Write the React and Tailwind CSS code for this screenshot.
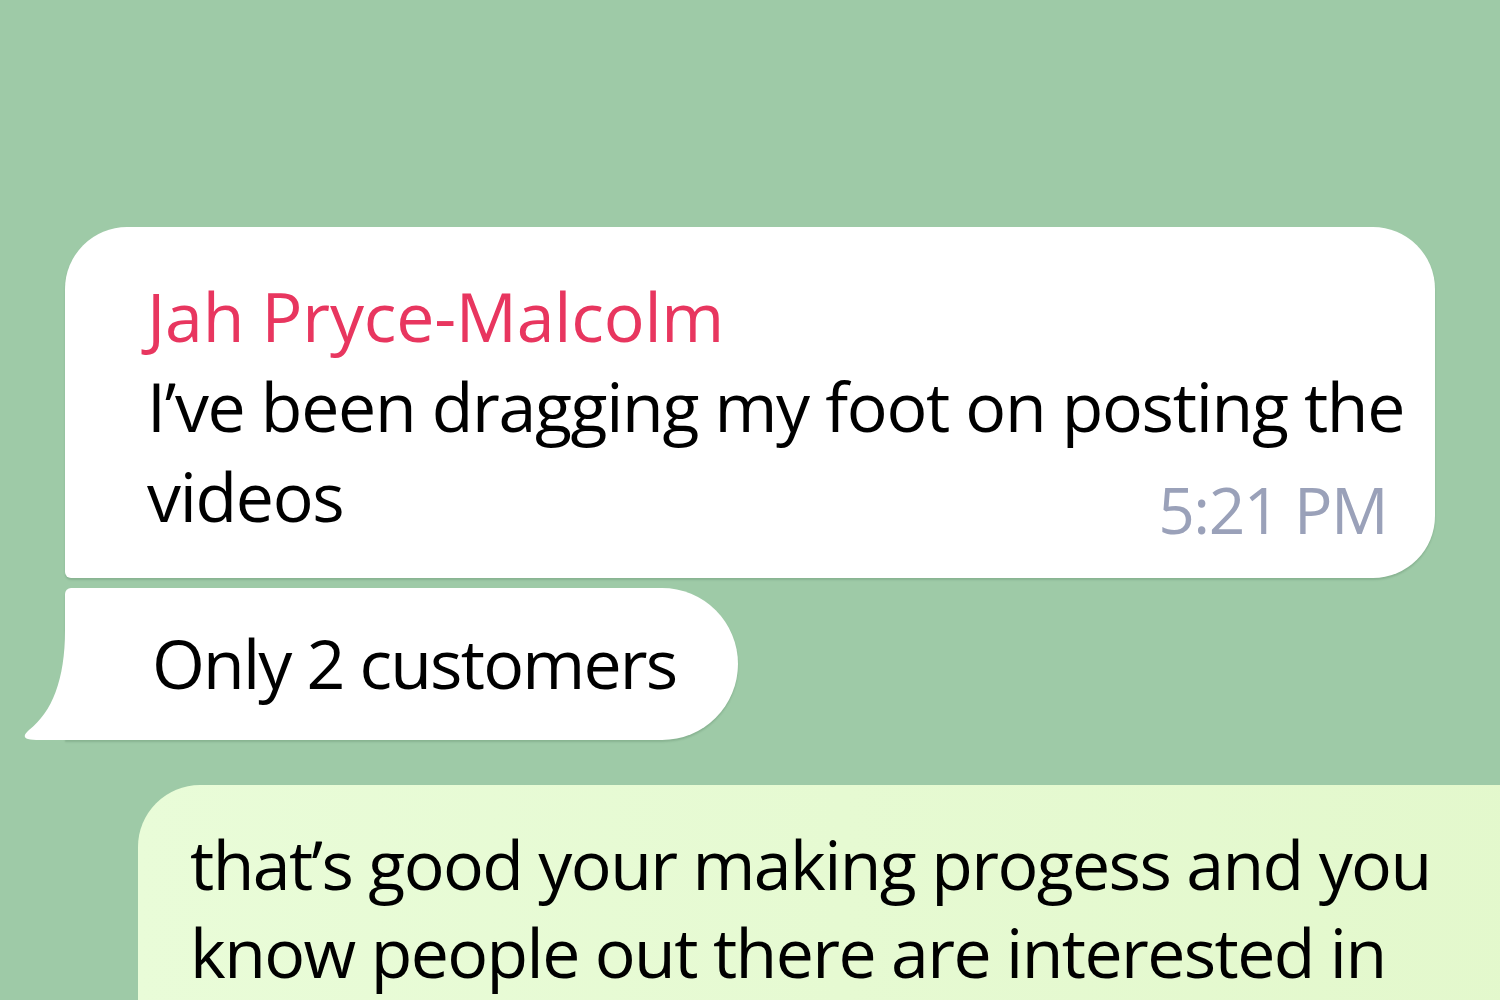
import React from "react";

const font = { fontFamily: '"Open Sans", "Noto Sans", sans-serif' };

const Tail = () => (
  <svg
    className="absolute left-[-45px] bottom-0"
    width="50"
    height="110"
    viewBox="0 0 50 110"
  >
    <path
      d="M45 0 C45 50 32 82 9 100 Q1 107 8 109 Q12 110 20 110 L50 110 L50 0 Z"
      fill="#ffffff"
    />
  </svg>
);

export default function App() {
  return (
    <div
      className="h-[1000px] w-[1500px] overflow-hidden bg-[#9ecaa7] pt-[227px] flex flex-col"
      style={font}
    >
      {/* incoming message */}
      <div className="shrink-0 ml-[65px] w-[1370px] rounded-[62px] rounded-bl-[6px] bg-white pl-[82px] pr-[14px] pt-[44px] pb-[28px] shadow-[0_2px_2px_rgba(40,80,50,0.18)]">
        <div className="text-[68px] leading-[90px] text-[#e8365f] tracking-[-0.2px]">
          Jah Pryce-Malcolm
        </div>
        <div className="text-[68px] leading-[90px] text-black tracking-[-1.3px]">
          I’ve been dragging my foot on posting the videos
        </div>
        <div className="-mt-[71px] mr-[34px] text-right text-[64px] leading-[80px] text-[#9aa1b9] tracking-[-1.5px]">
          5:21 PM
        </div>
      </div>

      {/* second incoming, with tail */}
      <div className="relative shrink-0 ml-[65px] mt-[10px] w-[673px] h-[152px] rounded-tl-[6px] rounded-r-[76px] bg-white pl-[87px] pt-[30px] shadow-[0_2px_2px_rgba(40,80,50,0.18)]">
        <Tail />
        <div className="text-[68px] leading-[90px] text-black tracking-[-1.8px]">
          Only 2 customers
        </div>
      </div>

      {/* outgoing */}
      <div className="shrink-0 ml-[138px] mt-[45px] w-[1420px] h-[400px] rounded-tl-[62px] bg-gradient-to-r from-[#e9fcd8] to-[#e3f8cc] pl-[52px] pt-[35px]">
        <div className="w-[1280px] text-[68px] leading-[88px] text-black tracking-[-1.6px]">
          that’s good your making progess and you know people out there are interested in
        </div>
      </div>
    </div>
  );
}
